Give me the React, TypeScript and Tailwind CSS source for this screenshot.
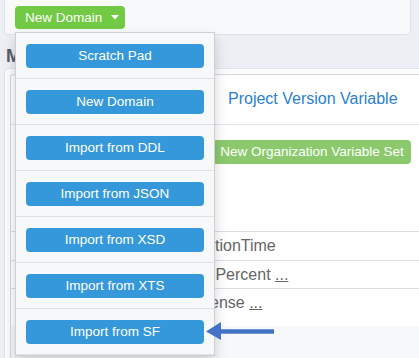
import React from "react";

const items = [
  "Scratch Pad",
  "New Domain",
  "Import from DDL",
  "Import from JSON",
  "Import from XSD",
  "Import from XTS",
  "Import from SF",
];

export default function App() {
  return (
    <div className="relative w-[419px] h-[358px] overflow-hidden bg-[#eceff3] font-['Liberation_Sans',Arial,sans-serif]">
      {/* top toolbar */}
      <div className="ml-[4px] w-[407px] h-[35px] bg-[#f8f9fa] border border-t-0 border-[#e0e3e8] rounded-b-[4px] pl-[10px] pt-[6px]">
        <button className="h-[23px] w-[110px] bg-[#72c944] rounded-[4px] text-white text-[13.5px] leading-[23px] flex items-center pl-[10px]">
          <span>New Domain</span>
          <svg width="8" height="5" viewBox="0 0 8 5" className="ml-[9px]">
            <polygon points="0,0 8,0 4,4.5" fill="#ffffff" />
          </svg>
        </button>
      </div>

      {/* heading */}
      <div className="h-[33px] pl-[6px] pt-[12px] text-[18px] leading-[18px] font-bold text-[#5a5d6b]">
        My Domains
      </div>

      {/* content panel */}
      <div className="ml-[4px] w-[430px] h-[300px] bg-[#fbfcfd] border border-[#dfe3e8] rounded-[5px] pl-[5px] pt-[5px]">
        <div className="h-full bg-white border-l border-t border-[#d6d8db] rounded-tl-[4px] flex flex-col">
          <div className="h-[50px] border-b border-[#e2e4e7] flex shrink-0">
            <div className="w-[217px] shrink-0" />
            <div className="pt-[12px] text-[16px] leading-[24px] text-[#2a80d2] whitespace-nowrap">
              Project Version Variable
            </div>
          </div>
          <div className="h-[107px] border-b border-[#dcdee1] pl-[202px] pt-[15px] shrink-0">
            <div className="h-[24px] w-[198px] bg-[#8cc96c] rounded-[4px] text-white text-[13.5px] leading-[24px] text-center whitespace-nowrap">
              New Organization Variable Set
            </div>
          </div>
          <div className="h-[29px] border-b border-[#dcdee1] flex text-[16px] leading-[28px] text-[#666666] whitespace-nowrap shrink-0">
            <div className="w-[204px] shrink-0 overflow-hidden flex justify-end">Expira</div>
            <span>tionTime</span>
          </div>
          <div className="h-[28px] border-b border-[#dcdee1] flex text-[16px] leading-[27px] text-[#666666] whitespace-nowrap shrink-0">
            <div className="w-[200px] shrink-0 overflow-hidden flex justify-end">Discount</div>
            <span>&nbsp;Percent <span className="underline">...</span></span>
          </div>
          <div className="h-[37px] flex text-[16px] leading-[28px] text-[#666666] whitespace-nowrap shrink-0">
            <div className="w-[199px] shrink-0 overflow-hidden flex justify-end">Lic</div>
            <span>ense <span className="underline">...</span></span>
          </div>
          <div className="flex-1 bg-[#f7f8fa]" />
        </div>
      </div>

      {/* dropdown menu */}
      <div className="absolute left-[15px] top-[32px] w-[200px] bg-[#f7f8fa] border border-[#cdd1d6] shadow-[0_6px_12px_rgba(0,0,0,0.175)]">
        {items.map((label) => (
          <div key={label} className="px-[10px] pt-[11px] pb-[10px] border-b border-[#dfe1e4]">
            <div className="h-[24px] w-[178px] bg-[#3598db] rounded-[4px] text-white text-[13.5px] leading-[24px] text-center whitespace-nowrap">
              {label}
            </div>
          </div>
        ))}
      </div>

      {/* annotation arrow */}
      <svg className="absolute left-[205px] top-[321px]" width="72" height="20" viewBox="0 0 72 20">
        <polygon
          points="1,10.5 16,1 16,8.3 69,8.3 69,12.7 16,12.7 16,19"
          fill="#4472c4"
        />
      </svg>
    </div>
  );
}
